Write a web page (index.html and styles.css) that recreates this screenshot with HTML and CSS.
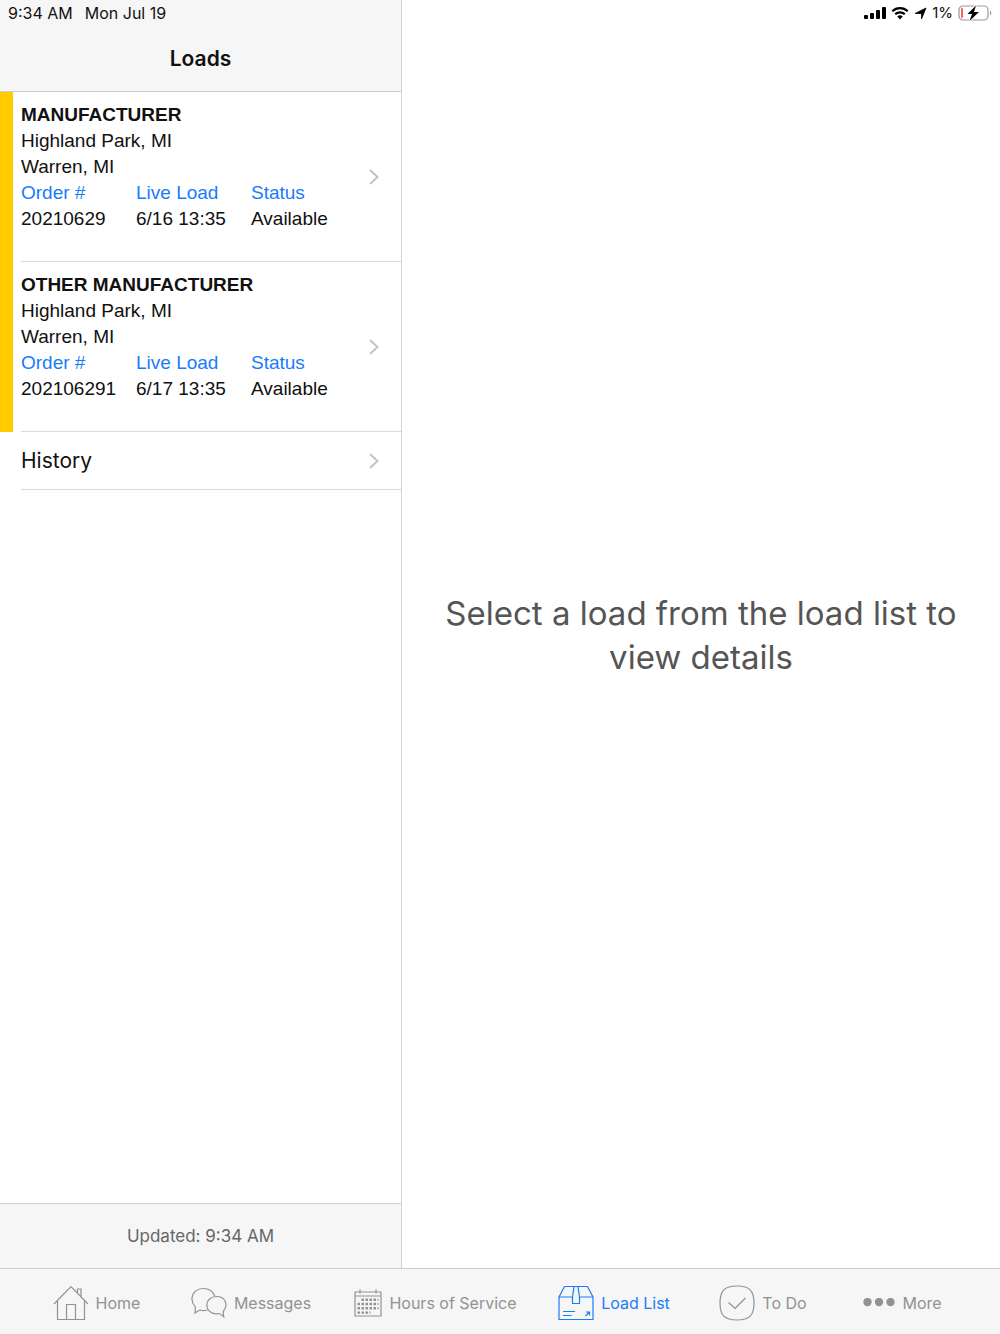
FILE: index.html
```html
<!DOCTYPE html>
<html lang="en">
<head>
<meta charset="utf-8">
<meta name="viewport" content="width=device-width, initial-scale=1">
<title>Loads</title>
<link rel="stylesheet" href="styles.css">
</head>
<body>
<div class="app">
  <div class="split">
    <aside class="sidebar">
      <header class="sidebar-header">
        <div class="status-bar">
          <time>9:34 AM</time>
          <span>Mon Jul 19</span>
        </div>
        <h1 class="title">Loads</h1>
      </header>
      <nav class="loads" aria-label="Loads">
        <a class="load" href="#load-20210629">
          <div class="load-body">
            <div class="load-text">
              <h2 class="load-name">MANUFACTURER</h2>
              <p>Highland Park, MI</p>
              <p>Warren, MI</p>
              <dl class="facts">
                <div><dt>Order #</dt><dd>20210629</dd></div>
                <div><dt>Live Load</dt><dd>6/16 13:35</dd></div>
                <div><dt>Status</dt><dd>Available</dd></div>
              </dl>
            </div>
            <svg class="chevron" viewBox="0 0 12 18" aria-hidden="true"><path d="M2 2l7.500 7L2 16"/></svg>
          </div>
        </a>
        <a class="load" href="#load-202106291">
          <div class="load-body">
            <div class="load-text">
              <h2 class="load-name">OTHER MANUFACTURER</h2>
              <p>Highland Park, MI</p>
              <p>Warren, MI</p>
              <dl class="facts">
                <div><dt>Order #</dt><dd>202106291</dd></div>
                <div><dt>Live Load</dt><dd>6/17 13:35</dd></div>
                <div><dt>Status</dt><dd>Available</dd></div>
              </dl>
            </div>
            <svg class="chevron" viewBox="0 0 12 18" aria-hidden="true"><path d="M2 2l7.500 7L2 16"/></svg>
          </div>
        </a>
        <a class="history" href="#history">
          <span>History</span>
          <svg class="chevron" viewBox="0 0 12 18" aria-hidden="true"><path d="M2 2l7.500 7L2 16"/></svg>
        </a>
      </nav>
      <footer class="updated">Updated: 9:34 AM</footer>
    </aside>
    <main class="detail">
      <div class="status-bar status-right">
        <svg class="signal" viewBox="0 0 22 14" aria-hidden="true"><rect x="0" y="9" width="4" height="4" rx="1"/><rect x="6" y="7" width="4" height="6" rx="1"/><rect x="12" y="4" width="4" height="9" rx="1"/><rect x="18" y="1" width="4" height="12" rx="1"/></svg>
        <svg class="wifi" viewBox="0 0 18 14" aria-hidden="true"><path d="M1.300 5.200a11 11 0 0 1 15.400 0M4.200 8.300a6.900 6.900 0 0 1 9.600 0" fill="none" stroke="#000" stroke-width="2.200"/><path d="M9 13.400L6.200 10.600a4 4 0 0 1 5.600 0z"/></svg>
        <svg class="location" viewBox="0 0 13 14" aria-hidden="true"><path d="M12 2L7.500 13V7.500H1z" stroke="#000" stroke-linejoin="round" stroke-width=".8"/></svg>
        <span class="percent">1%</span>
        <svg class="battery" viewBox="0 0 34 18" aria-hidden="true"><rect x="1" y="2" width="29" height="14" rx="4" fill="none" stroke="#999" stroke-width="1.200"/><path d="M32 6.500a3 3 0 0 1 0 5z" fill="#999"/><rect x="3" y="4" width="2" height="10" rx="1" fill="#ff6259"/><path d="M18 1.500L9.500 10H14l-2.500 7L21 8h-5z" stroke="#fff" stroke-width="1.600" paint-order="stroke"/></svg>
      </div>
      <p class="placeholder">Select a load from the load list to view details</p>
    </main>
  </div>
  <nav class="tabs" aria-label="Main">
    <a class="tab" href="#home">
      <svg class="icon" viewBox="0 0 36 36" aria-hidden="true"><path d="M1 19L18 1.500 35 19M4.500 16v18.500h27V16M13.500 34.500v-15h9v15M24.500 8V4H28v8"/></svg>
      <span>Home</span>
    </a>
    <a class="tab" href="#messages">
      <svg class="icon" viewBox="0 0 36 36" aria-hidden="true"><path d="M16.500 25c-2.800.8-5 .8-7.500 0-1.700.8-3.300 1.800-5 3 .4-2.300.4-4 .2-6.200C-2.500 14 2 3.500 12.500 3.500c5.500 0 9.500 3 11.500 8"/><path d="M25.500 11.500c-5.800 0-9.700 4-9.700 8.500 0 6 5.700 10 12.200 8.500 1.600.6 3 1.700 4.700 3.200-.4-2.300-.5-4-.2-5.700C37.500 20 34.500 11.500 25.500 11.500z"/></svg>
      <span>Messages</span>
    </a>
    <a class="tab" href="#hours">
      <svg class="icon icon-calendar" viewBox="0 0 28 32" aria-hidden="true"><path d="M1 5h26v24H1zM1 9h26M6 2.500v4M22 2.500v4"/><path d="M7.500 12.700h17M3.500 17h21M3.500 21.300h21M3.500 25.600h13" stroke-width="2.400" stroke-dasharray="2.500 1.500"/></svg>
      <span>Hours of Service</span>
    </a>
    <a class="tab tab-active" href="#loads" aria-current="page">
      <svg class="icon" viewBox="0 0 36 36" aria-hidden="true"><path d="M6.500 1.500h23L35 12v22.500H1V12zM1 12h13.500M21.500 12H35M16 1.500L14.500 12v6.500h7V12L20 1.500M5 26.500h12M5 30.500h8.500M27.500 31l4-4M28 27h3.500v3.500"/></svg>
      <span>Load List</span>
    </a>
    <a class="tab" href="#todo">
      <svg class="icon" viewBox="0 0 36 36" aria-hidden="true"><path d="M18 1c12.500 0 17 4.500 17 17s-4.500 17-17 17S1 30.500 1 18 5.500 1 18 1zM9.500 17.500l6.500 6L26.500 13"/></svg>
      <span>To Do</span>
    </a>
    <a class="tab" href="#more">
      <svg class="icon-more" viewBox="0 0 32 10" aria-hidden="true"><circle cx="4.500" cy="4" r="4.200"/><circle cx="16" cy="4" r="4.200"/><circle cx="27.500" cy="4" r="4.200"/></svg>
      <span>More</span>
    </a>
  </nav>
</div>
</body>
</html>
```
FILE: styles.css
```css
* {
  box-sizing: border-box;
}

body,
h1,
h2,
p,
dl,
dd {
  margin: 0;
}

body {
  font-family: Inter, "Liberation Sans", sans-serif;
  color: #111;
  background: #fff;
}

a {
  color: inherit;
  text-decoration: none;
}

.app {
  display: flex;
  flex-direction: column;
  min-height: 100vh;
}

.split {
  flex: 1;
  display: grid;
  grid-template-columns: 40.2% 1fr;
}

.sidebar {
  display: flex;
  flex-direction: column;
  border-right: 1px solid #d4d4d6;
}

.sidebar-header {
  height: 92px;
  background: #f6f6f6;
  border-bottom: 1px solid #cfcfd0;
}

.status-bar {
  display: flex;
  align-items: center;
  gap: 12px;
  height: 26px;
  padding: 0 8px;
  font-size: 16px;
  line-height: 26px;
}

.title {
  font-size: 21px;
  line-height: 66px;
  font-weight: 600;
  text-align: center;
}

.loads {
  flex: 1;
}

.load {
  display: block;
  padding-left: 8px;
  border-left: 13px solid #fc0;
  font-family: "Liberation Sans", Arial, sans-serif;
  font-size: 19px;
  line-height: 26px;
}

.load-body {
  display: flex;
  align-items: center;
  padding-right: 21px;
  border-bottom: 1px solid #dadadc;
}

.load-text {
  flex: 1;
  padding: 9px 0 29px;
}

.load-name {
  font-size: 19px;
  line-height: 27px;
  font-weight: 700;
}

.facts {
  display: grid;
  grid-template-columns: 115px 115px 1fr;
  white-space: nowrap;
}

.facts dt {
  color: #1a7cf9;
}

.history {
  display: flex;
  align-items: center;
  justify-content: space-between;
  height: 58px;
  margin-left: 21px;
  padding-right: 21px;
  border-bottom: 1px solid #dadadc;
  font-size: 21px;
}

.chevron {
  flex: none;
  width: 12px;
  height: 18px;
  fill: none;
  stroke: #c4c4c7;
  stroke-width: 2;
}

.updated {
  height: 65px;
  border-top: 1px solid #cfcfd0;
  background: #f6f6f6;
  color: #666;
  font-size: 17px;
  line-height: 64px;
  text-align: center;
}

.detail {
  display: flex;
  flex-direction: column;
}

.status-right {
  justify-content: flex-end;
  gap: 5px;
}

.signal {
  width: 22px;
  height: 14px;
}

.wifi {
  width: 18px;
  height: 14px;
}

.location {
  width: 13px;
  height: 14px;
}

.percent {
  font-size: 15px;
}

.battery {
  width: 34px;
  height: 18px;
}

.placeholder {
  margin: auto;
  padding: 0 40px 24px;
  color: #555;
  font-size: 33px;
  line-height: 44px;
  text-align: center;
}

.tabs {
  display: grid;
  grid-template-columns: 153fr 156fr 213fr 144fr 154fr 125fr;
  height: 66px;
  padding: 2px 35px 0 20px;
  border-top: 1px solid #cfcfd0;
  background: #f6f6f6;
  color: #929292;
  font-size: 16px;
}

.tab {
  display: flex;
  align-items: center;
  justify-content: center;
  gap: 7px;
  white-space: nowrap;
}

.tab-active {
  color: #1a7cf9;
}

.icon {
  width: 36px;
  height: 36px;
  fill: none;
  stroke: currentColor;
  stroke-width: 1.2;
}

.icon-calendar {
  width: 28px;
  height: 32px;
}

.icon-more {
  width: 32px;
  height: 10px;
  fill: currentColor;
}
```
